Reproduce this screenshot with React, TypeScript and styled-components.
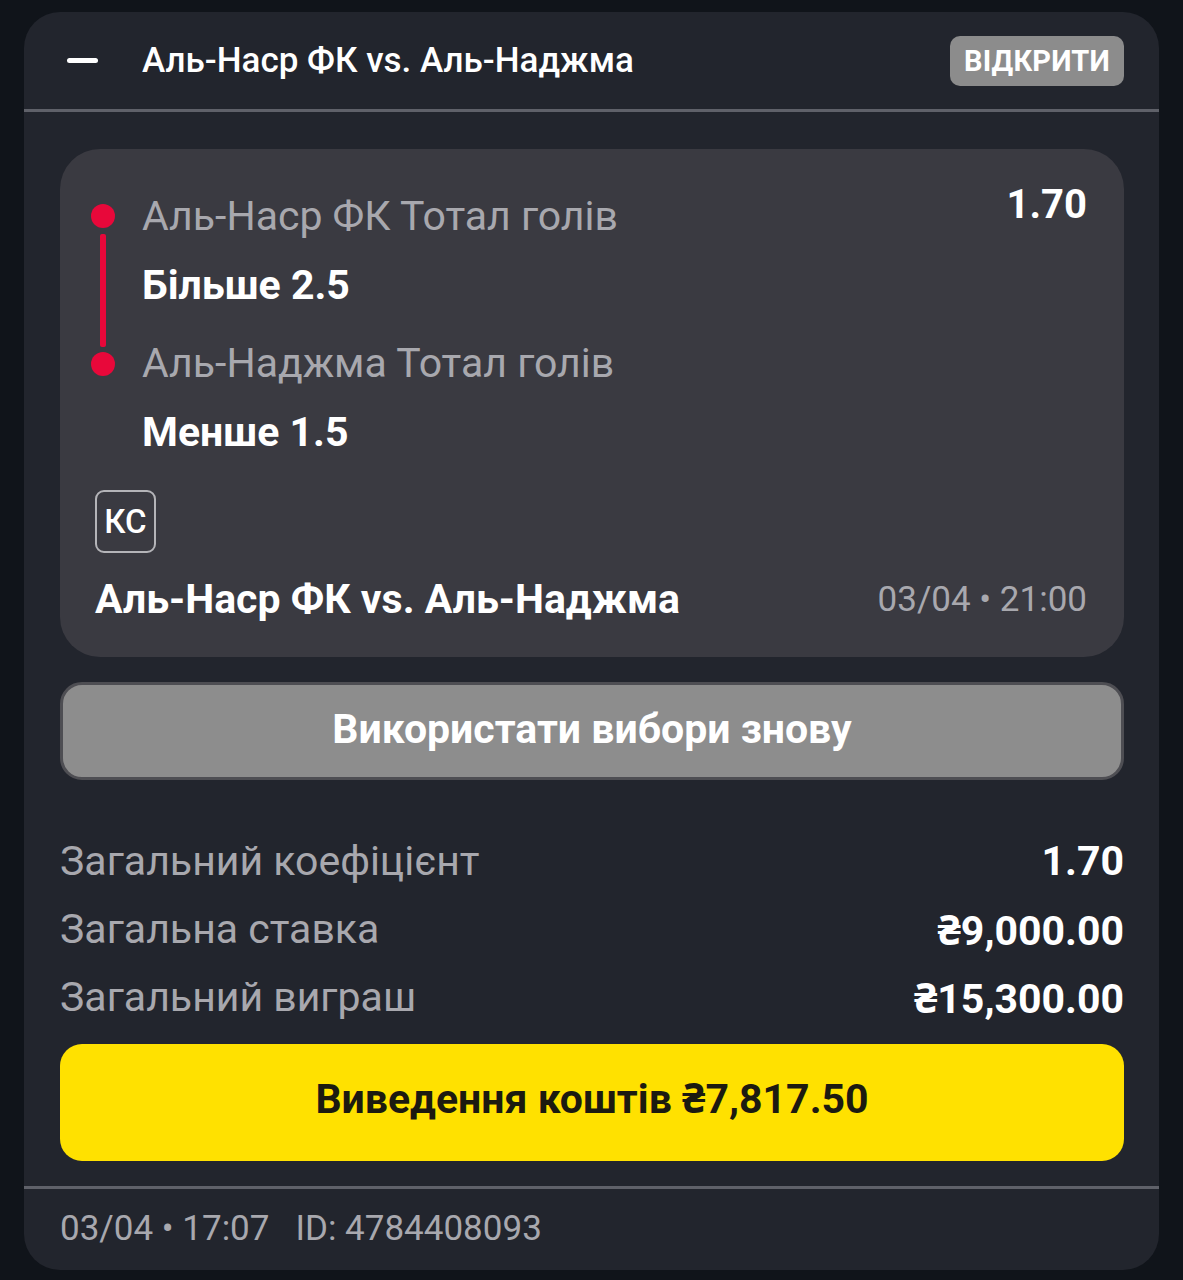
import React from "react";
import styled, { createGlobalStyle } from "styled-components";

const GlobalStyle = createGlobalStyle`
  html, body {
    margin: 0;
    padding: 0;
    background: #10141a;
  }
  body {
    font-family: Roboto, "Noto Sans", "Liberation Sans", sans-serif;
    -webkit-font-smoothing: antialiased;
  }
`;

const Page = styled.div`
  width: 1183px;
  height: 1280px;
  box-sizing: border-box;
  padding: 12px 24px 10px 24px;
  background: #10141a;
`;

const Card = styled.div`
  height: 100%;
  background: #22252d;
  border-radius: 36px;
  overflow: hidden;
  display: flex;
  flex-direction: column;
`;

const Header = styled.div`
  height: 97px;
  display: flex;
  align-items: center;
  padding: 0 35px 0 43px;
`;

const Minus = styled.span`
  width: 31px;
  height: 5px;
  border-radius: 3px;
  background: #ffffff;
  margin-right: 44px;
`;

const HeaderTitle = styled.div`
  color: #ffffff;
  font-size: 35px;
  font-weight: 500;
  line-height: 42px;
`;

const StatusBadge = styled.div`
  margin-left: auto;
  height: 50px;
  padding: 0 14px;
  border-radius: 10px;
  background: #8c8c8c;
  color: #ffffff;
  font-size: 29px;
  font-weight: 700;
  display: flex;
  align-items: center;
  letter-spacing: 0.2px;
`;

const Divider = styled.div`
  height: 3px;
  background: #5f6169;
`;

const Body = styled.div`
  padding: 37px 35px 25px 36px;
  display: flex;
  flex-direction: column;
`;

const BetCard = styled.div`
  background: #3a3a41;
  border-radius: 40px;
  padding: 43px 37px 34px 31px;
  display: flex;
  flex-direction: column;
`;

const LegsRow = styled.div`
  display: flex;
  align-items: flex-start;
`;

const Timeline = styled.div`
  padding-top: 12px;
  display: flex;
  flex-direction: column;
  align-items: center;
  width: 24px;
  margin-right: 27px;
`;

const Dot = styled.span`
  width: 24px;
  height: 24px;
  border-radius: 50%;
  background: #e8083a;
`;

const Line = styled.span`
  width: 6px;
  height: 113px;
  margin: 6px 0 5px;
  border-radius: 2px;
  background: #e8083a;
`;

const Legs = styled.div`
  flex: 1;
  display: flex;
  flex-direction: column;
  gap: 30px;
`;

const Leg = styled.div`
  display: flex;
  flex-direction: column;
  gap: 21px;
`;

const Market = styled.div`
  color: #a8a8ae;
  font-size: 41px;
  line-height: 48px;
  font-weight: 400;
`;

const Pick = styled.div`
  color: #ffffff;
  font-size: 41px;
  line-height: 48px;
  font-weight: 700;
`;

const Odds = styled.div`
  color: #ffffff;
  font-size: 40px;
  font-weight: 700;
  line-height: 48px;
  margin-top: -11px;
`;

const SportBadge = styled.div`
  margin: 34px 0 0 4px;
  width: 61px;
  height: 63px;
  box-sizing: border-box;
  border: 2px solid #b4b4b8;
  border-radius: 9px;
  display: flex;
  align-items: center;
  justify-content: center;
  color: #ffffff;
  font-size: 33px;
  font-weight: 500;
`;

const MatchRow = styled.div`
  margin: 22px 0 0 4px;
  display: flex;
  align-items: center;
  justify-content: space-between;
  height: 48px;
`;

const MatchTitle = styled.div`
  color: #ffffff;
  font-size: 41px;
  font-weight: 700;
`;

const MatchDate = styled.div`
  color: #a8a8ae;
  font-size: 35px;
  font-weight: 400;
`;

const ReuseButton = styled.button`
  margin-top: 25px;
  height: 98px;
  border: 3px solid #4e4e53;
  border-radius: 22px;
  background: #8d8d8d;
  color: #ffffff;
  font-family: inherit;
  font-size: 41px;
  font-weight: 700;
  line-height: 48px;
  padding: 0 0 4px;
  cursor: pointer;
`;

const Summary = styled.div`
  margin-top: 47px;
  display: flex;
  flex-direction: column;
`;

const SummaryRow = styled.div`
  height: 68px;
  display: flex;
  align-items: center;
  justify-content: space-between;
`;

const SummaryLabel = styled.span`
  color: #a8a8ae;
  font-size: 41px;
  font-weight: 400;
`;

const SummaryValue = styled.span`
  color: #ffffff;
  font-size: 41px;
  font-weight: 700;
`;

const CashoutButton = styled.button`
  margin-top: 13px;
  height: 117px;
  border: none;
  border-radius: 22px;
  background: #ffe100;
  color: #1c1a10;
  font-family: inherit;
  font-size: 41px;
  font-weight: 700;
  line-height: 48px;
  padding: 0 0 8px;
  cursor: pointer;
`;

const Footer = styled.div`
  flex: 1;
  display: flex;
  align-items: center;
  padding-left: 36px;
  gap: 26px;
  color: #a8a8ae;
  font-size: 35px;
  padding-bottom: 2px;
`;

const summary = [
  { label: "Загальний коефіцієнт", value: "1.70" },
  { label: "Загальна ставка", value: "₴9,000.00" },
  { label: "Загальний виграш", value: "₴15,300.00" },
];

export default function App() {
  return (
    <>
      <GlobalStyle />
      <Page>
        <Card>
          <Header>
            <Minus />
            <HeaderTitle>Аль-Наср ФК vs. Аль-Наджма</HeaderTitle>
            <StatusBadge>ВІДКРИТИ</StatusBadge>
          </Header>
          <Divider />
          <Body>
            <BetCard>
              <LegsRow>
                <Timeline>
                  <Dot />
                  <Line />
                  <Dot />
                </Timeline>
                <Legs>
                  <Leg>
                    <Market>Аль-Наср ФК Тотал голів</Market>
                    <Pick>Більше 2.5</Pick>
                  </Leg>
                  <Leg>
                    <Market>Аль-Наджма Тотал голів</Market>
                    <Pick>Менше 1.5</Pick>
                  </Leg>
                </Legs>
                <Odds>1.70</Odds>
              </LegsRow>
              <SportBadge>КС</SportBadge>
              <MatchRow>
                <MatchTitle>Аль-Наср ФК vs. Аль-Наджма</MatchTitle>
                <MatchDate>03/04 • 21:00</MatchDate>
              </MatchRow>
            </BetCard>
            <ReuseButton>Використати вибори знову</ReuseButton>
            <Summary>
              {summary.map((s) => (
                <SummaryRow key={s.label}>
                  <SummaryLabel>{s.label}</SummaryLabel>
                  <SummaryValue>{s.value}</SummaryValue>
                </SummaryRow>
              ))}
            </Summary>
            <CashoutButton>Виведення коштів ₴7,817.50</CashoutButton>
          </Body>
          <Divider />
          <Footer>
            <span>03/04 • 17:07</span>
            <span>ID: 4784408093</span>
          </Footer>
        </Card>
      </Page>
    </>
  );
}
